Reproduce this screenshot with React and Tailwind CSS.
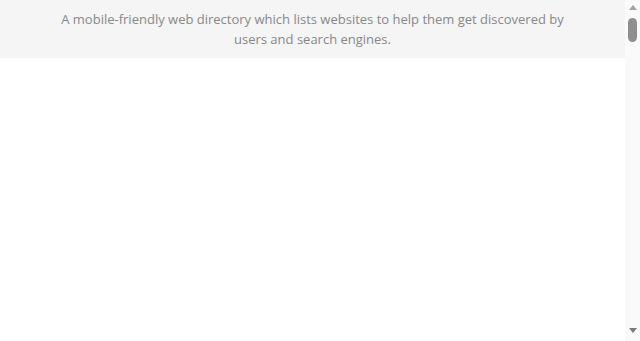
import React from 'react';

const Scrollbar = () => (
  <div className="fixed top-0 right-0 h-screen w-[15px] bg-[#fafafa] flex flex-col items-center">
    <div className="mt-[5px] w-0 h-0 border-x-[4px] border-x-transparent border-b-[5px] border-b-[#a3a3a3]" />
    <div className="mt-[8px] w-[9px] h-[24px] rounded-full bg-[#8f8f8f]" />
    <div className="flex-1" />
    <div className="mb-[8px] w-0 h-0 border-x-[4px] border-x-transparent border-t-[5px] border-t-[#7a7a7a]" />
  </div>
);

const App = () => {
  return (
    <div className="min-h-[4400px] bg-white" style={{ fontFamily: '"Open Sans", sans-serif' }}>
      <div className="mr-[15px] bg-[#f5f5f5] py-[9px]">
        <p className="max-w-[520px] mx-auto text-center text-[13px] leading-[20px] text-[#888888]">
          A mobile-friendly web directory which lists websites to help them get discovered by users and search engines.
        </p>
      </div>
      <Scrollbar />
    </div>
  );
};

export default App;
